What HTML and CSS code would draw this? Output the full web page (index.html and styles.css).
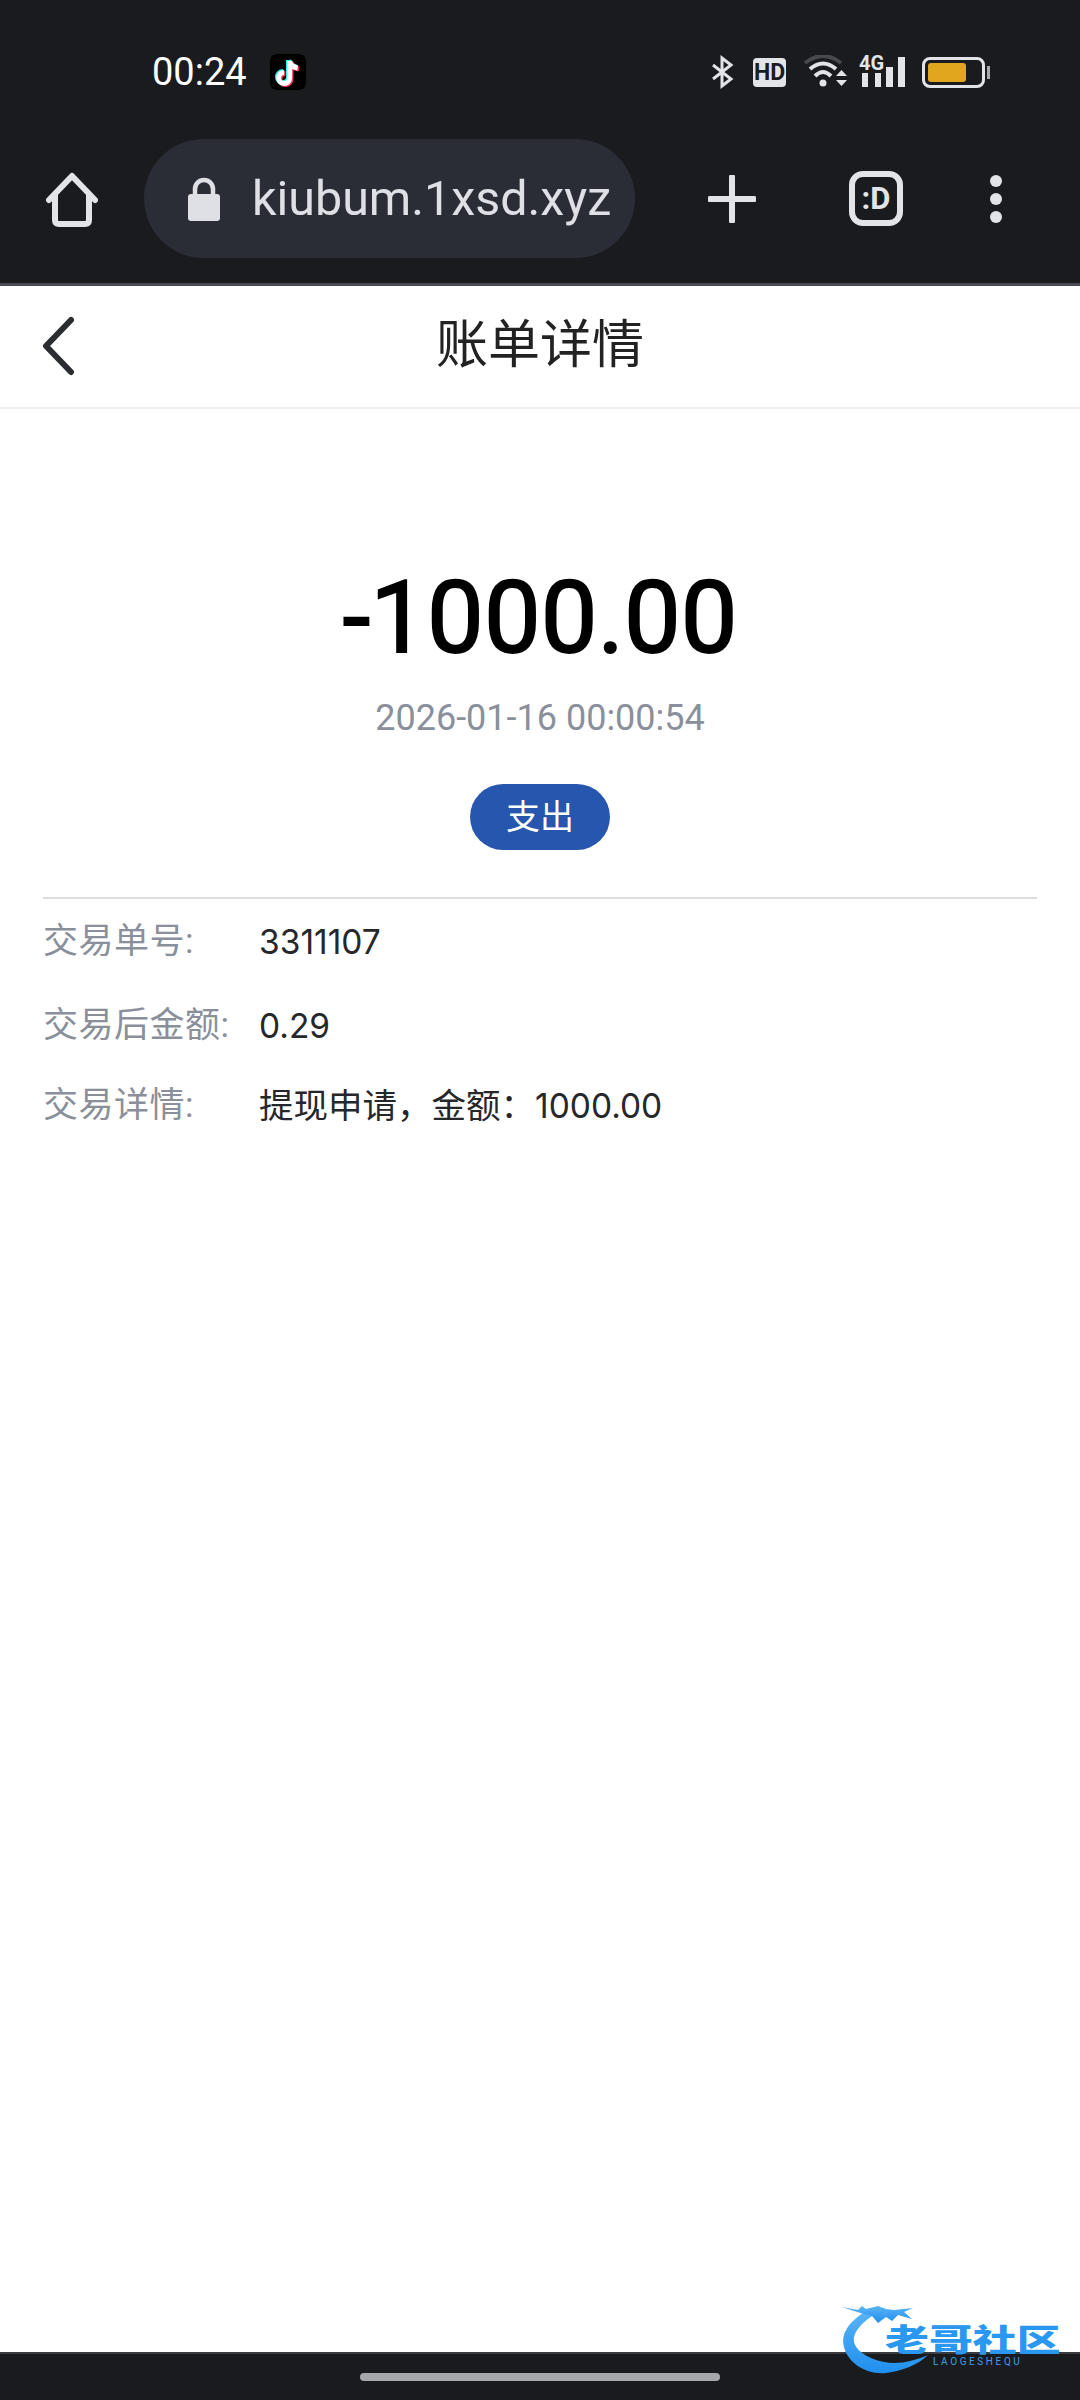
FILE: index.html
```html
<!DOCTYPE html>
<html lang="zh">
<head>
<meta charset="utf-8">
<title>账单详情</title>
<link rel="stylesheet" href="styles.css">
</head>
<body>
<div class="phone">
  <header class="chrome">
    <div class="status">
      <span class="time">00:24</span>
      <svg class="tiktok" viewBox="0 0 36 36">
        <rect width="36" height="36" rx="7" fill="#000"/>
        <g fill="none" stroke-width="5" stroke-linecap="butt">
          <path d="M18.500 6V23a5.500 5.500 0 1 1-5.500-5.500M18.500 6q1 6 8 7" stroke="#25f4ee"/>
          <path d="M21 8V25a5.500 5.500 0 1 1-5.500-5.500M21 8q1 6 8 7" stroke="#fe2c55"/>
          <path d="M19.700 7V24a5.500 5.500 0 1 1-5.500-5.500M19.700 7q1 6 8 7" stroke="#fff"/>
        </g>
      </svg>
      <div class="status-icons">
        <svg class="bt" viewBox="0 0 23 34"><path d="M2 10 20 24 11 31V3L20 10 2 24" fill="none" stroke="#e3e4e8" stroke-width="3"/></svg>
        <span class="hd">HD</span>
        <svg class="wifi" viewBox="0 0 44 34">
          <path d="M2 8Q20-6 38 8" fill="none" stroke="#48494d" stroke-width="4"/>
          <path d="M7 14Q20 3 33 14" fill="none" stroke="#e3e4e8" stroke-width="4"/>
          <path d="M12 21Q20 13 28 21" fill="none" stroke="#e3e4e8" stroke-width="4"/>
          <circle cx="20" cy="28" r="3.500" fill="#e3e4e8"/>
          <path d="M33 21 38.500 15 44 21ZM33 25H44L38.500 31Z" fill="#e3e4e8"/>
        </svg>
        <div class="signal">
          <span class="four-g">4G</span>
          <svg class="bars" viewBox="0 0 48 34">
            <path d="M3 18h6v14H3zM16 18h6v14h-6zM27 12h7v20h-7zM39 2h7v30h-7z" fill="#e3e4e8"/>
          </svg>
        </div>
        <div class="battery"><span class="battery-fill"></span></div>
      </div>
    </div>
    <div class="toolbar">
      <svg class="home" viewBox="0 0 54 56">
        <path d="M4 29 27 5 50 29" fill="none" stroke="#e3e4e8" stroke-width="6" stroke-linecap="round" stroke-linejoin="round"/>
        <path d="M10 23V49q0 4 4 4H40q4 0 4-4V23" fill="none" stroke="#e3e4e8" stroke-width="6"/>
      </svg>
      <div class="pill">
        <svg class="lock" viewBox="0 0 32 44">
          <rect y="17" width="32" height="27" rx="3" fill="#dfe0e6"/>
          <path d="M7 20V12a9 9 0 0 1 18 0V20" fill="none" stroke="#dfe0e6" stroke-width="4.500"/>
        </svg>
        <span class="url">kiubum.1xsd.xyz</span>
      </div>
      <svg class="plus" viewBox="0 0 48 48">
        <path d="M24 2V46M2 24H46" stroke="#e3e4e8" stroke-width="6" stroke-linecap="round"/>
      </svg>
      <div class="tabs">:D</div>
      <div class="dots"><span></span><span></span><span></span></div>
    </div>
  </header>
  <nav class="nav">
    <svg class="back" viewBox="0 0 36 60">
      <path d="M30 4 5 30 30 56" fill="none" stroke="#2b2d31" stroke-width="6" stroke-linecap="round" stroke-linejoin="round"/>
    </svg>
    <h1 class="title">账单详情</h1>
  </nav>
  <main class="content">
    <section class="summary">
      <div class="amount">-1000.00</div>
      <div class="date">2026-01-16 00:00:54</div>
      <div class="badge">支出</div>
    </section>
    <section class="details">
      <div class="row row-a"><span class="label">交易单号:</span><span class="value num">3311107</span></div>
      <div class="row row-b"><span class="label">交易后金额:</span><span class="value num">0.29</span></div>
      <div class="row row-c"><span class="label">交易详情:</span><span class="value">提现申请，金额：<span class="num">1000.00</span></span></div>
    </section>
  </main>
  <footer class="gesture"><span class="handle"></span></footer>
  <div class="watermark">
    <svg class="dragon" viewBox="0 0 110 70">
      <defs><linearGradient id="blue" x1="0" x2="0" y1="0" y2="1"><stop offset="0" stop-color="#5ab4f5"/><stop offset="1" stop-color="#1f8fee"/></linearGradient></defs>
      <path d="M24 6C8 16-2 28 2 42 6 58 24 70 44 68 60 66 76 60 86 50 72 56 56 60 42 57 24 53 10 44 12 32 14 24 22 16 32 10Z" fill="url(#blue)"/>
      <path d="M0 2 16 5 20 1 24 4 36 1 44 4 52 5 71 3 62 7 70 14 56 10 50 16 44 12 36 18 30 11 22 9 12 6Z" fill="url(#blue)"/>
    </svg>
    <span class="wm-cn">老哥社区</span>
    <span class="wm-en">LAOGESHEQU</span>
  </div>
</div>
</body>
</html>
```
FILE: styles.css
```css
* { box-sizing: border-box; }
html, body { margin: 0; padding: 0; }
body { font-family: Roboto, "Noto Sans CJK SC", sans-serif; background: #fff; }
.phone { position: relative; width: 1080px; height: 2400px; display: flex; flex-direction: column; overflow: hidden; }

.chrome { background: #1a1b1f; border-bottom: 3px solid #4a4b50; }
.status { height: 114px; padding: 30px 95px 0 152px; display: flex; align-items: center; }
.time { color: #fff; font-size: 38px; width: 118px; }
.tiktok { width: 36px; height: 36px; }
.status-icons { margin-left: auto; display: flex; align-items: center; }
.bt { width: 23px; height: 34px; }
.hd { margin-left: 19px; width: 33px; height: 29px; border-radius: 4px; background: #e3e4e8; color: #1a1b1f; font-family: "Liberation Sans Narrow", Roboto, sans-serif; font-size: 23px; font-weight: 700; line-height: 29px; text-align: center; }
.wifi { margin-left: 17px; width: 44px; height: 34px; }
.signal { margin-left: 12px; width: 48px; height: 34px; position: relative; }
.bars { display: block; width: 48px; height: 34px; }
.four-g { position: absolute; left: 0; top: -2px; font-family: "Liberation Sans Narrow", Roboto, sans-serif; font-size: 20px; line-height: 20px; font-weight: 700; color: #e3e4e8; }
.battery { margin-left: 15px; width: 63px; height: 31px; border: 3px solid #e3e4e8; border-radius: 8px; padding: 3px; position: relative; }
.battery::after { content: ""; position: absolute; right: -8px; top: 6px; width: 3px; height: 13px; background: #a9aaad; }
.battery-fill { display: block; width: 74%; height: 100%; background: #e0a61e; border-radius: 3px; }

.toolbar { height: 169px; display: flex; align-items: center; padding-left: 45px; }
.home { width: 54px; height: 56px; }
.pill { margin-left: 45px; width: 491px; height: 119px; border-radius: 60px; background: #2a2d36; display: flex; align-items: center; padding-left: 44px; }
.lock { width: 32px; height: 44px; flex: none; }
.url { margin-left: 32px; white-space: nowrap; color: #dfe0e6; font-size: 48.4px; }
.plus { margin-left: 73px; width: 48px; height: 48px; }
.tabs { margin-left: 93px; width: 54px; height: 55px; border: 6px solid #e3e4e8; border-radius: 14px; color: #e3e4e8; font-family: "Liberation Sans Narrow", Roboto, sans-serif; font-size: 31px; font-weight: 700; display: flex; align-items: center; justify-content: center; }
.dots { margin-left: 87px; display: flex; flex-direction: column; gap: 6px; }
.dots span { width: 12px; height: 12px; border-radius: 50%; background: #e3e4e8; }

.nav { height: 123px; border-bottom: 2px solid #eeeeee; display: flex; align-items: center; justify-content: center; position: relative; }
.back { position: absolute; left: 41px; top: 30px; width: 36px; height: 60px; }
.title { margin: 0 0 2px; font-size: 52px; line-height: 70px; font-weight: 400; color: #222; }

.content { flex: 1; padding: 0 43px; }
.summary { display: flex; flex-direction: column; align-items: center; padding-top: 149px; height: 490px; border-bottom: 2px solid #dddddd; }
.amount { font-size: 101px; line-height: 120px; font-weight: 400; -webkit-text-stroke: 1.8px #000; color: #000; }
.date { margin-top: 18px; font-size: 36px; line-height: 44px; color: #8a8f9c; }
.badge { margin-top: 44px; width: 140px; height: 66px; border-radius: 33px; background: #2656ad; color: #fff; font-size: 34px; line-height: 66px; text-align: center; }

.row { display: flex; align-items: center; font-size: 34.5px; line-height: 48px; }
.row-a { margin-top: 19px; }
.row-b { margin-top: 36px; }
.row-c { margin-top: 32px; }
.label { width: 216px; font-size: 35px; letter-spacing: 0.5px; color: #8a8f9c; }
.value { color: #26272b; }
.num { font-family: Inter, sans-serif; font-size: 33.5px; }

.gesture { height: 48px; background: #1a1b1f; border-top: 2px solid #3a3b3f; display: flex; justify-content: center; padding-top: 19px; }
.handle { width: 360px; height: 8px; border-radius: 4px; background: #a6a7aa; }

.watermark { position: absolute; left: 842px; top: 2305px; width: 222px; height: 70px; }
.dragon { position: absolute; left: 0; top: 0; width: 110px; height: 70px; }
.wm-cn { position: absolute; left: 43px; top: 20px; font-size: 36px; line-height: 36px; font-weight: 900; color: #2a97f0; white-space: nowrap; transform: scale(1.22, 0.85); transform-origin: left top; }
.wm-en { position: absolute; left: 91px; top: 51px; font-size: 10px; line-height: 12px; letter-spacing: 2.6px; color: #3c9fe8; white-space: nowrap; }
```
